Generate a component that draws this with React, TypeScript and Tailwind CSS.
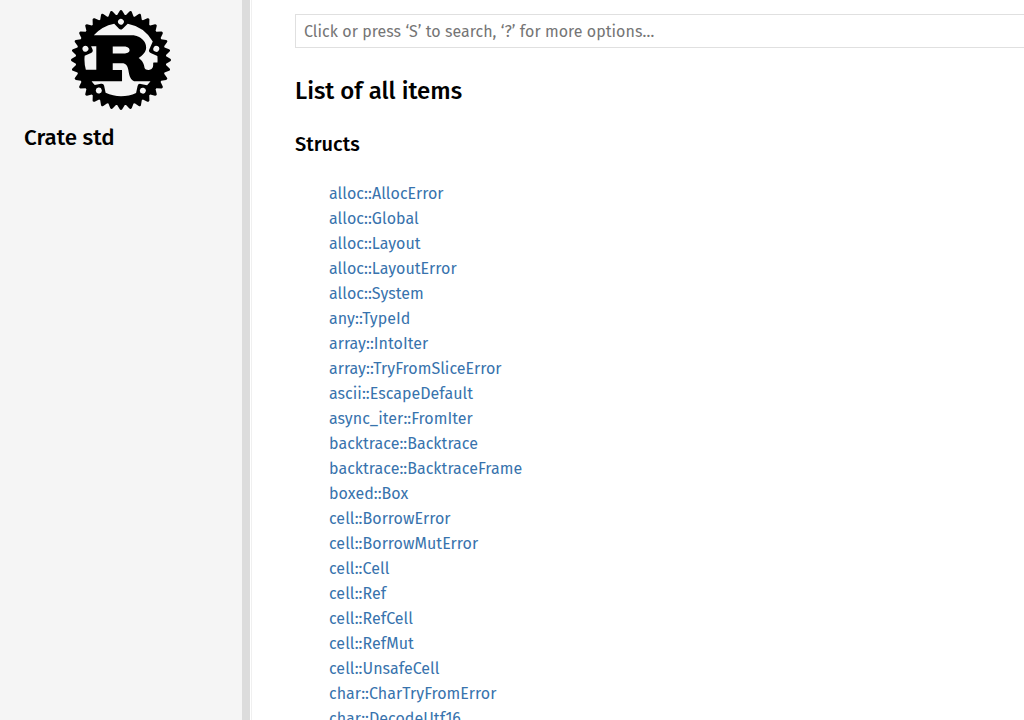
import { SiRust } from "react-icons/si";

const structs: string[] = [
  "alloc::AllocError",
  "alloc::Global",
  "alloc::Layout",
  "alloc::LayoutError",
  "alloc::System",
  "any::TypeId",
  "array::IntoIter",
  "array::TryFromSliceError",
  "ascii::EscapeDefault",
  "async_iter::FromIter",
  "backtrace::Backtrace",
  "backtrace::BacktraceFrame",
  "boxed::Box",
  "cell::BorrowError",
  "cell::BorrowMutError",
  "cell::Cell",
  "cell::Ref",
  "cell::RefCell",
  "cell::RefMut",
  "cell::UnsafeCell",
  "char::CharTryFromError",
  "char::DecodeUtf16",
];

export default function App() {
  return (
    <div className="flex h-screen overflow-hidden bg-white font-['Fira_Sans','Noto_Sans',sans-serif] text-black">
      <nav className="h-full w-[242px] shrink-0 bg-[#f5f5f5] pt-2.5">
        <SiRust className="mx-auto block size-[100px]" />
        <h2 className="mt-3 ml-6 text-[22.4px] leading-[31px] font-medium whitespace-nowrap">Crate std</h2>
      </nav>
      <div className="w-[10px] shrink-0 border-r border-[#f0f0f0] bg-white">
        <div className="h-full w-2 bg-[#dcdcdc]" />
      </div>
      <main className="min-w-0 flex-1 pt-3.5 pl-[43px]">
        <input
          className="block h-[34px] w-[760px] border border-[#e0e0e0] bg-white px-2 text-base tracking-[0.04px] outline-none placeholder:text-[#757575]"
          placeholder="Click or press ‘S’ to search, ‘?’ for more options…"
        />
        <h1 className="mt-[27px] text-2xl leading-8 font-medium">List of all items</h1>
        <h3 className="mt-6 text-xl leading-[26px] font-medium">Structs</h3>
        <ul className="mt-6 pl-[34px] text-base leading-[25px] tracking-[0.04px] text-[#3873ad]">
          {structs.map((name) => (
            <li key={name} className="h-[25px] whitespace-nowrap">
              <a href="#">{name}</a>
            </li>
          ))}
        </ul>
      </main>
    </div>
  );
}
